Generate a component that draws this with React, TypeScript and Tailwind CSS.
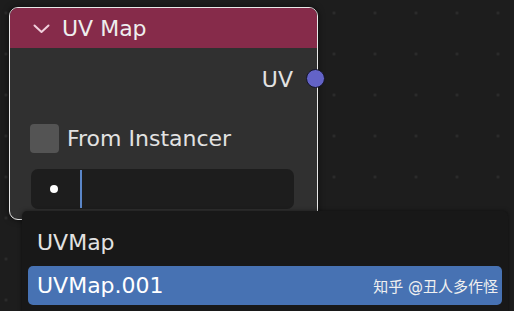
import React from 'react';

const items = ['UVMap', 'UVMap.001'];

export default function App() {
  return (
    <div
      className="relative w-[514px] h-[311px] overflow-hidden bg-[#1d1d1d] bg-[radial-gradient(circle,#2c2c2c_1.2px,transparent_1.8px)] bg-[size:41px_41px] bg-[position:-14.5px_-7.5px]"
      style={{ fontFamily: '"DejaVu Sans", "Noto Sans CJK SC", sans-serif' }}
    >
      {/* Node */}
      <div className="absolute left-[9px] top-[7px] w-[309px] h-[213px] rounded-[9px] border-[1.5px] border-[#e8e8e8] bg-[#303030] shadow-[0_0_6px_rgba(0,0,0,0.6)]">
        <div className="flex items-center h-[40px] rounded-t-[8px] bg-[#862b4a] pl-[23px] gap-[12px] text-[22px] text-[#eeeeee]">
          <svg width="17" height="10" viewBox="0 0 17 10" className="mt-[1px]">
            <path d="M1.5 1.5 L8.5 8 L15.5 1.5" fill="none" stroke="#f0d0dc" strokeWidth="2" strokeLinecap="round" strokeLinejoin="round" />
          </svg>
          <span>UV Map</span>
        </div>

        <div className="relative flex flex-col">
          {/* Output */}
          <div className="flex items-center justify-end h-[40px] pr-[24px] mt-[11px] text-[22px] text-[#e2e2e2]">
            UV
          </div>
          <div className="absolute right-[-8px] top-[21px] w-[19px] h-[19px] rounded-full bg-[#6363c7] border-[1.5px] border-[#15152a]" />

          {/* Checkbox */}
          <div className="flex items-center gap-[8px] pl-[20px] mt-[25px] h-[29px]">
            <div className="w-[29px] h-[29px] rounded-[4px] bg-[#545454]" />
            <span className="text-[22px] text-[#e2e2e2]">From Instancer</span>
          </div>

          {/* Text field */}
          <div className="flex items-center ml-[21px] mt-[16px] w-[263px] h-[40px] rounded-[7px] bg-[#1d1d1d]">
            <div className="w-[8px] h-[8px] rounded-full bg-white ml-[19px]" />
            <div className="w-[2px] h-[38px] bg-[#5b86c8] ml-[22px]" />
          </div>
        </div>
      </div>

      {/* Dropdown menu */}
      <div className="absolute left-[22px] top-[211px] w-[486px] h-[110px] rounded-[5px] bg-[#181818] shadow-[0_0_4px_rgba(0,0,0,0.5)] px-[6px] pt-[18px] flex flex-col gap-[11px]">
        <div className="flex items-center h-[26px] pl-[9px] text-[22px] text-[#e2e2e2]">{items[0]}</div>
        <div className="flex items-center justify-between h-[39px] rounded-[5px] bg-[#4772b3] pl-[9px] pr-[4px] text-[22px] text-white">
          <span>{items[1]}</span>
          <span className="text-[15px] text-[#f0f0f0] mt-[4px]">知乎 @丑人多作怪</span>
        </div>
      </div>
    </div>
  );
}
